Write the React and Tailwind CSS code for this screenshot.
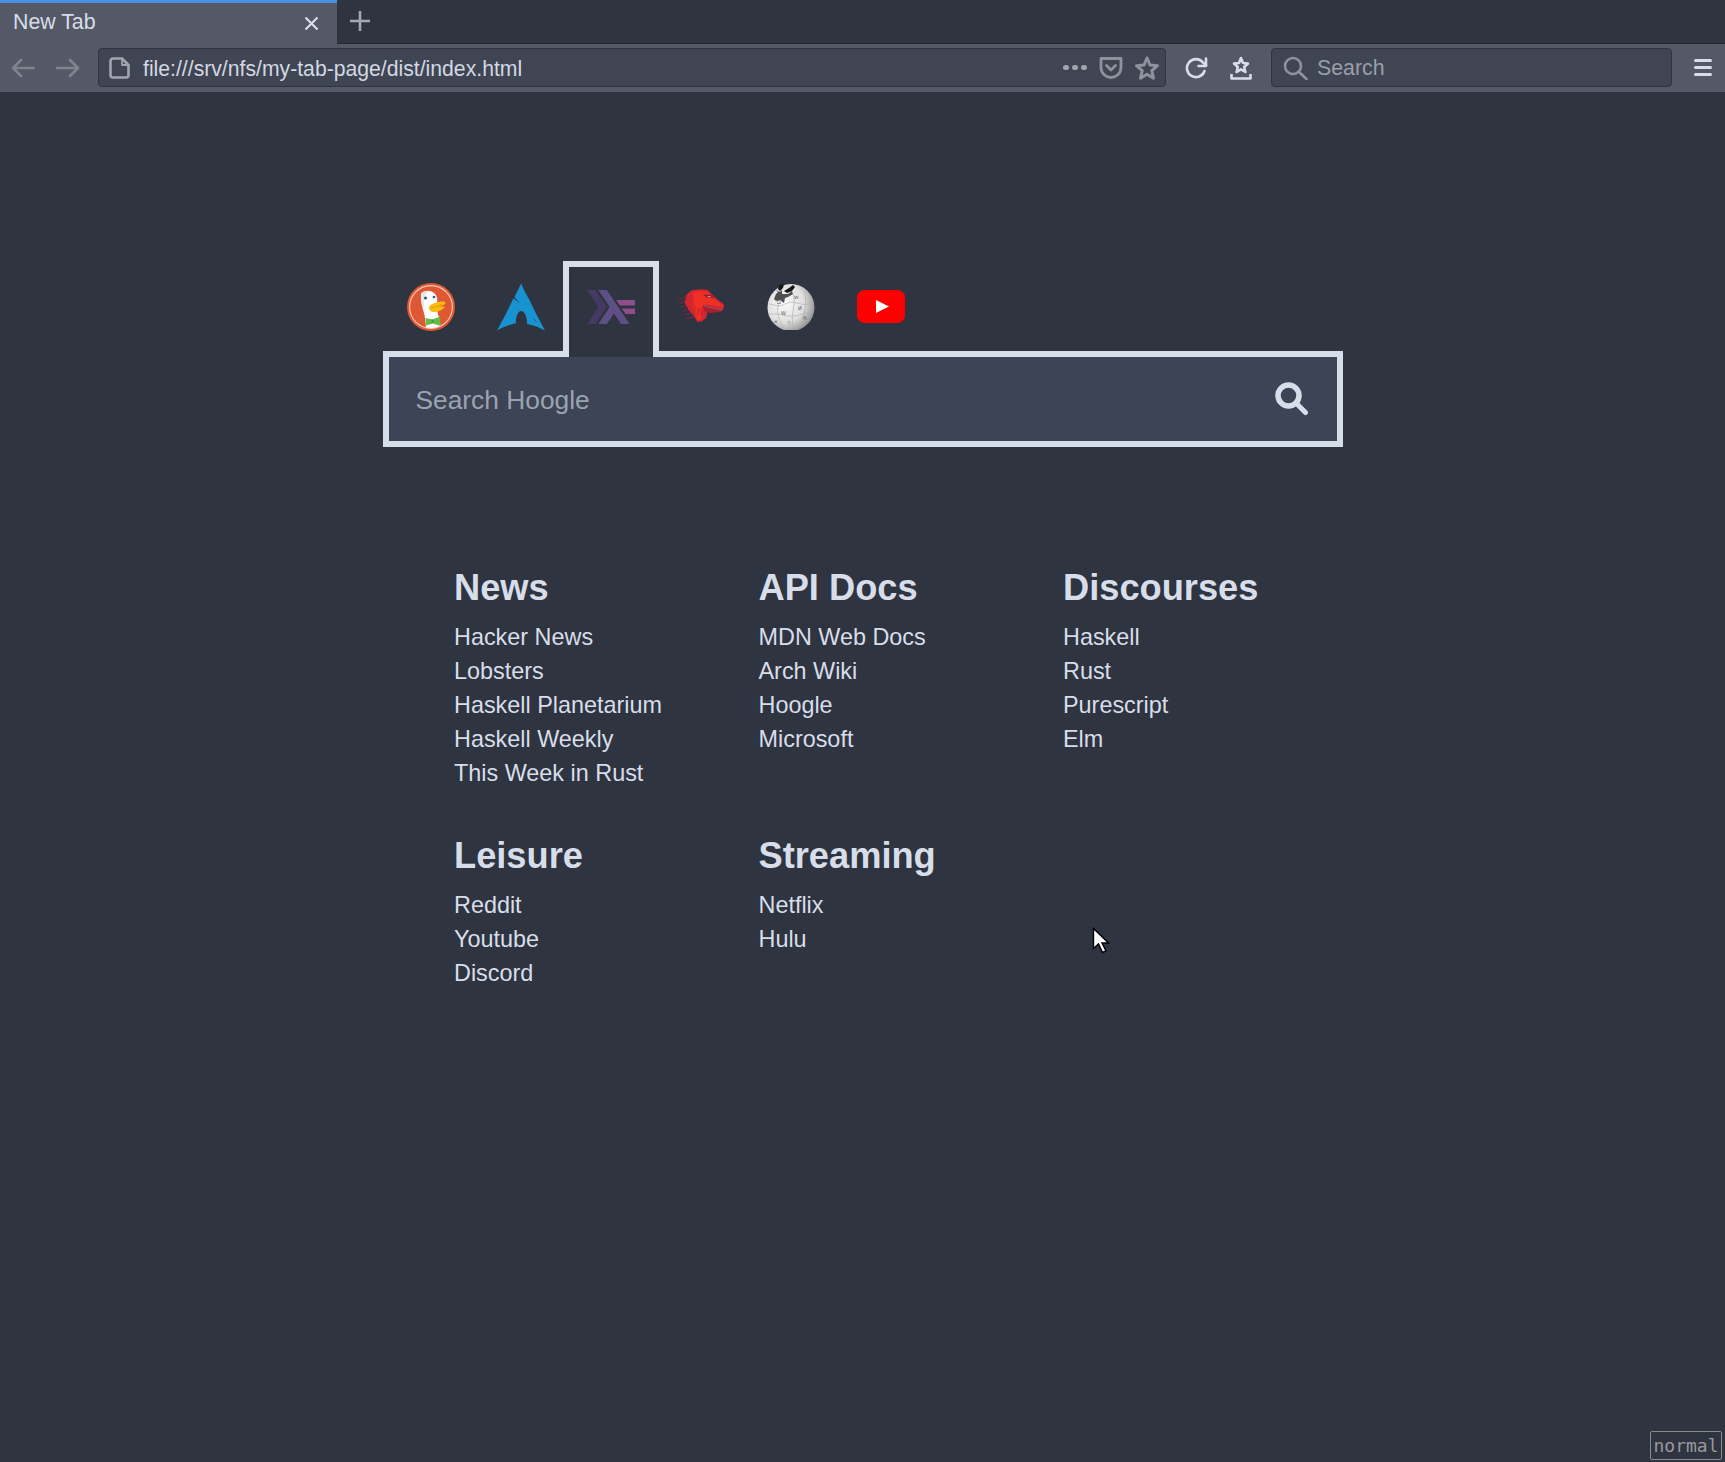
import React from "react";

const sans = { fontFamily: '"Liberation Sans", Arial, sans-serif' };

function ToolIcon({ w, h, children, className = "", view }) {
  return (
    <svg width={w} height={h} viewBox={view || `0 0 ${w} ${h}`} fill="none" stroke="currentColor" strokeWidth="2.6" strokeLinecap="round" strokeLinejoin="round" className={"shrink-0 " + className}>
      {children}
    </svg>
  );
}

function Duck() {
  return (
    <svg width="48" height="48" viewBox="0 0 48 48">
      <circle cx="24" cy="24" r="24" fill="#de5833" />
      <circle cx="24" cy="24" r="21.4" fill="none" stroke="#f6c9b8" strokeWidth="1.1" />
      <clipPath id="dc"><circle cx="24" cy="24" r="21" /></clipPath>
      <g clipPath="url(#dc)">
        <path d="M14.500 10c4-3.500 11-3 14 1.500 2 3 2 6 1.500 9.500-.5 3 0 8 2 13 1 3 1.500 8 1.500 14H19c0-5-.5-11-1.500-16-1.500-7-5-14-3-22z" fill="#fff" />
        <path d="M14.500 10c3-2.500 6-2.500 8-1.500-3 1-5 3.500-5.500 7-.5 4 .5 9 1.500 14-2-4-5-14-4-19.500z" fill="#e6e6e6" />
      </g>
      <circle cx="18.500" cy="15" r="1.500" fill="#2d4f8e" />
      <circle cx="27" cy="14" r="1.300" fill="#2d4f8e" />
      <path d="M22 24c1-3 8-5 12-5.500 2-.3 4.500 0 4.500 1.200 0 1.800-5 4-7.500 4.800 3-.5 6-1.200 6.500-1 .5 1.500-4.500 5-9.500 5.500-4 .4-6.500-2-6-5z" fill="#f9bd12" />
      <path d="M24 24.500c3 0 8-1.500 11-3" stroke="#d98a0a" strokeWidth=".8" fill="none" />
      <path d="M18.500 35l7 1.500 7.500-3 .5 9.500-7.500-2.500-7 2z" fill="#65bc46" />
      <path d="M24.500 36.500h2.500v3.500h-2.500z" fill="#43a244" />
    </svg>
  );
}

function Arch() {
  return (
    <svg width="48" height="48" viewBox="350 99 145 144">
      <path
        d="M423 100C431 120 440 135 448 150L470 195 495 242C478 232 462 226 441 222 441 200 433 183 423 183 413 183 407 200 407 220 388 224 368 233 350 242L378 190 400 144C405 150 414 156 422 160 414 154 408 149 403 140z"
        fill="#1793d1"
      />
      <path d="M459 203c4 6 8 10 13 15-6-3-11-8-13-15z" fill="#2e3440" />
    </svg>
  );
}

function Haskell() {
  return (
    <svg width="48" height="34" viewBox="0 0 480 340.16">
      <path d="M0 340.16L113.39 170.08 0 0h85.04l113.39 170.08L85.04 340.16z" fill="#453a62" />
      <path d="M113.39 340.16L226.77 170.08 113.39 0h85.04l226.77 340.16h-85.04L269.29 233.86l-70.86 106.3z" fill="#5e5086" />
      <path d="M385.51 240.94l-37.8-56.69h132.28v56.69zM328.82 155.91l-37.8-56.69h188.97v56.69z" fill="#8f4e8b" />
    </svg>
  );
}

function Dino() {
  return (
    <svg width="48" height="38" viewBox="82 113 144 114">
      <g fill="none" stroke="#8c2233" strokeWidth="3">
        <path d="M86 148l32-12M90 160l30-12M93 170l30-8M100 183l30-10M106 193l28-6M112 204l26-6M124 127l-22 12" />
      </g>
      <path d="M112 132l14-12 26-3 22 2 14 14 14 14 20 14 1 12-4 6-40-6-6 14-4 16-12 10-14 2-10-18-16-18-12-22z" fill="#d42530" />
      <path d="M128 128l24-6 22 2 12 13 14 14 19 13-2 6-46-8-14 6-6 18 4 20-10 6-8-16-6-22 1-24z" fill="#ee3124" />
      <path d="M160 164l58 14-4 7-32 3-19-7z" fill="#a9202c" />
      <path d="M163 166c16 5 36 11 55 12" fill="none" stroke="#7c6a80" strokeWidth="2.500" />
      <path d="M160 132l24 2 10 10-22-2z" fill="#8c1f2c" />
      <path d="M172 137l10 0 4 4-10 0z" fill="#d9808a" />
      <path d="M148 172l-6 26M136 166l-4 30" stroke="#b81e2a" strokeWidth="2.500" fill="none" />
    </svg>
  );
}

function Wiki() {
  return (
    <svg width="48" height="46" viewBox="0 0 48 46">
      <defs>
        <radialGradient id="wg" cx="36%" cy="40%" r="68%">
          <stop offset="0%" stopColor="#fbfbfb" />
          <stop offset="62%" stopColor="#dedede" />
          <stop offset="100%" stopColor="#8f8f8f" />
        </radialGradient>
      </defs>
      <circle cx="24" cy="23.500" r="23.500" fill="url(#wg)" />
      <path d="M9 6l4 2 2-2 0 4 6 0 4-3 1 3-5 3-3 1-1 5-4-3-4 1-2-2 2-5 2-2z" fill="#4f4f4f" />
      <path d="M12 1l5-1-1 4-3 3-2-2zM17 7l5-3 4-3 2 2-3 4-5 2z" fill="#161616" />
      <g fill="none" stroke="#b0b0b0" strokeWidth=".7">
        <path d="M2 20c6 1 10 3 14 1s8-4 14-2 10 2 16 0" />
        <path d="M1 31c6-2 11-1 15 0s10 2 16 0 9-3 13-2" />
        <path d="M12 19c-2 5-2 10 0 15s3 7 5 10" />
        <path d="M26 9c2 6 1 12 0 18s-1 12 1 17" />
        <path d="M37 7c2 6 2 12 1 18s-3 10-3 15" />
      </g>
      <g fill="#555" fontFamily='"DejaVu Sans", sans-serif' aria-hidden="true">
        <text x="10" y="20" fontSize="5">Ω</text>
        <text x="27" y="15" fontSize="4.500">W</text>
        <text x="14" y="31" fontSize="5">W</text>
        <text x="31" y="26" fontSize="5">И</text>
        <text x="7" y="39" fontSize="3.500">Ж</text>
        <text x="20" y="40" fontSize="3.500">ウ</text>
        <text x="36" y="35" fontSize="3.500">維</text>
      </g>
    </svg>
  );
}

function Youtube() {
  return (
    <svg width="48" height="34" viewBox="0 0 48 34">
      <rect width="48" height="33" rx="7.500" fill="#ff0000" />
      <path d="M19 10l13 6.500-13 6.500z" fill="#fff" />
    </svg>
  );
}

const engines = [
  { key: "ddg", node: <Duck /> },
  { key: "arch", node: <Arch /> },
  { key: "hs", node: <Haskell />, active: true },
  { key: "moz", node: <Dino /> },
  { key: "wiki", node: <Wiki /> },
  { key: "yt", node: <Youtube /> },
];

const sections = [
  { title: "News", links: ["Hacker News", "Lobsters", "Haskell Planetarium", "Haskell Weekly", "This Week in Rust"] },
  { title: "API Docs", links: ["MDN Web Docs", "Arch Wiki", "Hoogle", "Microsoft"] },
  { title: "Discourses", links: ["Haskell", "Rust", "Purescript", "Elm"] },
  { title: "Leisure", links: ["Reddit", "Youtube", "Discord"] },
  { title: "Streaming", links: ["Netflix", "Hulu"] },
];

export default function App() {
  return (
    <div className="relative flex min-h-[1462px] flex-col overflow-hidden bg-[#2e3440]" style={sans}>
      {/* Tab strip */}
      <div className="flex h-[44px] items-stretch bg-[#2e3440]">
        <div className="flex w-[337px] items-center justify-between border-t-[3px] border-[#4a90e2] bg-[#555866] pl-[13px] pr-[18px]">
          <span className="relative top-[-1px] text-[21.33px] text-[#d8dee9]">New Tab</span>
          <ToolIcon w={15} h={15} className="text-[#d8dee9]">
            <path d="M1.500 1.500l12 12M13.500 1.500l-12 12" strokeLinecap="butt" strokeWidth="2.200" />
          </ToolIcon>
        </div>
        <div className="flex flex-1 items-center border-b border-[#23272f] pb-[2px] pl-[12px]">
          <ToolIcon w={22} h={22} className="text-[#a4a9b3]">
            <path d="M11 1v20M1 11h20" strokeLinecap="butt" />
          </ToolIcon>
        </div>
      </div>

      {/* Toolbar */}
      <div className="flex h-[48px] items-center bg-[#555866] pb-[1px]">
        <div className="flex w-[98px] items-center pl-[11px] text-[#7f838e]">
          <ToolIcon w={24} h={20}><path d="M23 10H2M10 2l-8 8 8 8" /></ToolIcon>
          <ToolIcon w={24} h={20} className="ml-[21px]"><path d="M1 10h21M14 2l8 8-8 8" /></ToolIcon>
        </div>
        <div className="flex h-[39px] w-[1068px] items-center rounded-[4px] border border-[#2e3440] bg-[#3f4552] pl-[10px] pr-[6px]">
          <ToolIcon w={21} h={22} className="text-[#a0a5b0]">
            <path d="M13 1.500H4a2.500 2.500 0 0 0-2.500 2.500v14A2.500 2.500 0 0 0 4 20.500h13a2.500 2.500 0 0 0 2.500-2.500V8z" />
            <path d="M13 1.500V8h6.500" strokeWidth="1.800" />
          </ToolIcon>
          <span className="relative top-[1px] ml-[13px] flex-1 text-[21.2px] text-[#d3d8e2]">file:///srv/nfs/my-tab-page/dist/index.html</span>
          <div className="mr-[12px] flex gap-[3px]">
            <span className="h-[5px] w-[6px] rounded-full bg-[#a0a5b0]" />
            <span className="h-[5px] w-[6px] rounded-full bg-[#a0a5b0]" />
            <span className="h-[5px] w-[6px] rounded-full bg-[#a0a5b0]" />
          </div>
          <ToolIcon w={24} h={22} className="text-[#8d929d]">
            <path d="M2 1.500h20v9c0 6-5 10-10 10S2 16.500 2 10.500z" strokeWidth="2.800" />
            <path d="M7.500 8.500L12 13l4.500-4.500" strokeWidth="2.800" />
          </ToolIcon>
          <ToolIcon w={24} h={24} className="ml-[12px] text-[#8d929d]">
            <path d="M12 2l3 7 7.500.7-5.700 5 1.700 7.500-6.500-4-6.500 4 1.700-7.500-5.700-5L9 9z" strokeWidth="3" />
          </ToolIcon>
        </div>
        <ToolIcon w={23} h={22} className="ml-[19px] text-[#d8dee9]">
          <path d="M19.500 14a9 9 0 1 1-1.500-8.500L21 8.500" />
          <path d="M21 1.500v7.500h-7.500" />
        </ToolIcon>
        <ToolIcon w={22} h={24} className="ml-[22px] text-[#d8dee9]">
          <path d="M11 2l2 5 5 .5-3.800 3.500 1.200 5-4.400-2.700L6.600 16l1.200-5L4 7.500 9 7z" />
          <path d="M1.500 18v4.500h19V18" strokeLinecap="butt" />
        </ToolIcon>
        <div className="ml-[19px] flex h-[39px] w-[401px] items-center rounded-[4px] border border-[#2e3440] bg-[#3f4552] pl-[11px]">
          <ToolIcon w={25} h={24} className="text-[#8d929d]">
            <circle cx="10" cy="10" r="8" />
            <path d="M16 16l7.500 7" />
          </ToolIcon>
          <span className="relative top-[1px] ml-[9px] text-[21.33px] text-[#9a9fa9]">Search</span>
        </div>
        <div className="ml-[22px] flex w-[18px] flex-col gap-[4px]">
          <span className="h-[3px] rounded-[2px] bg-[#d8dee9]" />
          <span className="h-[3px] rounded-[2px] bg-[#d8dee9]" />
          <span className="h-[3px] rounded-[2px] bg-[#d8dee9]" />
        </div>
      </div>

      {/* Page */}
      <main className="mx-auto w-[960px] pt-[169px]">
        <div className="relative z-10 -mb-[6px] flex">
          {engines.map((e) => (
            <div
              key={e.key}
              className={
                "relative -mr-[6px] flex h-[96px] w-[96px] justify-center border-[6px] border-b-0 " +
                (e.active ? "z-10 border-[#d8dee9] bg-[#2e3440]" : "border-transparent")
              }
            >
              <div className="flex h-[80px] w-[48px] items-center justify-center">{e.node}</div>
            </div>
          ))}
        </div>
        <div className="flex h-[96px] items-center justify-between border-[6px] border-[#d8dee9] bg-[#3d4456] pl-[27px] pr-[28px]">
          <span className="relative top-[2px] text-[26.33px] text-[#9ca3af]">Search Hoogle</span>
          <svg width="34" height="34" viewBox="0 0 34 34" fill="none" stroke="#d8dee9" strokeWidth="5.500" strokeLinecap="round">
            <circle cx="13.500" cy="13.500" r="10.500" />
            <path d="M22 22l8.500 8.500" strokeWidth="5" />
          </svg>
        </div>

        <div className="ml-[71.5px] mt-[121px] grid grid-cols-[304.5px_304.5px_304.5px] gap-y-[46px]">
          {sections.map((s) => (
            <section key={s.title}>
              <h2 className="mb-[12px] text-[36.25px] font-bold leading-[40px] text-[#d8dee9]">{s.title}</h2>
              <ul>
                {s.links.map((l) => (
                  <li key={l} className="text-[23.4px] leading-[34px] text-[#d8dee9]">{l}</li>
                ))}
              </ul>
            </section>
          ))}
        </div>
      </main>

      {/* Vim mode badge */}
      <div className="absolute bottom-[2px] right-[3px] flex h-[29px] w-[72px] items-center justify-center rounded-[2px] border border-[#8a8a8a] text-[18px] text-[#9a9a9a]" style={{ fontFamily: '"DejaVu Sans Mono", monospace' }}>
        normal
      </div>

      {/* Mouse cursor */}
      <svg className="absolute left-[1092px] top-[927px]" width="18" height="28" viewBox="0 0 18 28">
        <path d="M1.500 1.500v20l5-4.500 4 8.500 3.500-1.500-4-8h6.500z" fill="#fff" stroke="#000" strokeWidth="1.400" />
      </svg>
    </div>
  );
}
